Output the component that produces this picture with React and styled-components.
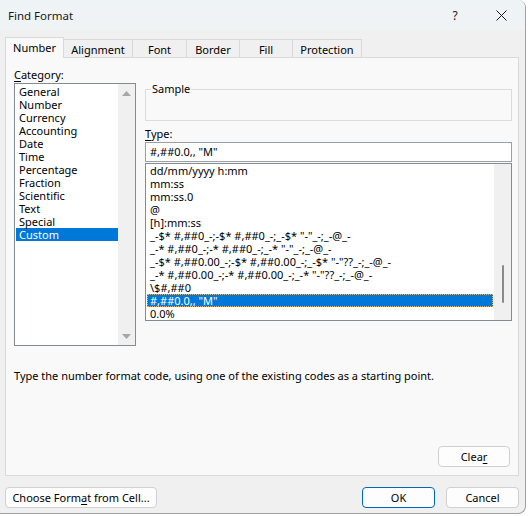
import React from 'react';
import styled, { createGlobalStyle, css } from 'styled-components';

const GlobalStyle = createGlobalStyle`
  html, body {
    margin: 0;
    padding: 0;
    background: #ffffff;
  }
  body {
    font-family: "Noto Sans", "Liberation Sans", sans-serif;
    font-size: 11px;
    color: #000;
  }
`;

// Window frame
const Window = styled.div`
  width: 526px;
  height: 514px;
  box-sizing: border-box;
  background: #f0f0f0;
  border-right: 1px solid #a0a0a0;
  border-bottom: 1px solid #a0a0a0;
  border-radius: 0 8px 8px 0;
  display: flex;
  flex-direction: column;
  overflow: hidden;
`;

const TitleBar = styled.div`
  height: 30px;
  flex-shrink: 0;
  display: flex;
  align-items: center;
  padding: 0 1px 0 8px;
  background: linear-gradient(#eef3f6, #eff3f6);
`;

const Title = styled.div`
  flex: 1;
  color: #1a1a1a;
  font-size: 11.5px;
`;

const CaptionButton = styled.div`
  width: 46px;
  height: 30px;
  display: flex;
  align-items: center;
  justify-content: center;
  color: #1a1a1a;
  font-size: 12px;
`;

const Body = styled.div`
  flex: 1;
  display: flex;
  flex-direction: column;
  padding: 7px 6px 5px 5px;
  min-height: 0;
`;

// Tabs
const TabRow = styled.div`
  display: flex;
  align-items: flex-end;
  height: 21px;
  margin-bottom: -1px;
  position: relative;
  z-index: 1;
`;

const Tab = styled.div`
  box-sizing: border-box;
  width: ${p => p.$width}px;
  display: flex;
  align-items: center;
  justify-content: center;
  border: 1px solid #d9d9d9;
  margin-left: -1px;
  &:first-child { margin-left: 0; }
  ${p => p.$active ? css`
    height: 21px;
    background: #f9f9f9;
    border-bottom: none;
    padding-bottom: 1px;
  ` : css`
    height: 19px;
    background: #f0f0f0;
    padding-top: 1px;
  `}
`;

const Panel = styled.div`
  flex: 1;
  display: flex;
  flex-direction: column;
  background: #f9f9f9;
  border: 1px solid #d9d9d9;
  padding: 9px 6px 8px 8px;
`;

const TopGrid = styled.div`
  display: grid;
  grid-template-columns: 122px 1fr;
  column-gap: 9px;
  align-items: start;
`;

const Column = styled.div`
  display: flex;
  flex-direction: column;
`;

const Label = styled.div`
  line-height: 15px;
  height: 15px;
  margin-top: ${p => p.$top || 0}px;
  margin-bottom: 1px;
  white-space: nowrap;
`;

const AccessKey = styled.span`
  text-decoration: underline;
  text-underline-offset: 2px;
`;

// List boxes
const ListBox = styled.div`
  display: flex;
  box-sizing: border-box;
  height: ${p => p.$height}px;
  margin-top: ${p => p.$top || 0}px;
  background: #ffffff;
  border: 1px solid #868a91;
  overflow: hidden;
`;

const Items = styled.div`
  flex: 1;
  min-width: 0;
  padding: ${p => p.$pad};
`;

const Item = styled.div`
  height: 13px;
  line-height: 13px;
  padding-left: ${p => p.$indent}px;
  white-space: nowrap;
  box-sizing: border-box;
  ${p => p.$selected && css`
    background: #0078d7;
    color: #ffffff;
  `}
  ${p => p.$focused && css`
    outline: 1px dotted #e8b060;
    outline-offset: -1px;
  `}
`;

const ScrollTrack = styled.div`
  width: 17px;
  flex-shrink: 0;
  background: #f0f0f0;
  display: flex;
  flex-direction: column;
  align-items: center;
  justify-content: ${p => (p.$arrows ? 'space-between' : 'flex-start')};
  padding: ${p => (p.$arrows ? '7px 0 6px' : '0')};
  box-sizing: border-box;
`;

const Thumb = styled.div`
  width: 2px;
  height: 38px;
  margin-top: 101px;
  border-radius: 1px;
  background: #8a8a8a;
`;

// Sample group box
const GroupBox = styled.div`
  position: relative;
  height: 32px;
  box-sizing: border-box;
  margin-top: 22px;
  border: 1px solid #dcdcdc;
`;

const Legend = styled.span`
  position: absolute;
  left: 5px;
  top: -9px;
  padding: 0 1px;
  line-height: 15px;
  background: #f9f9f9;
`;

const TextInput = styled.div`
  box-sizing: border-box;
  height: 20px;
  background: #ffffff;
  border: 1px solid #9a9ea5;
  padding-left: 4px;
  line-height: 18px;
  white-space: nowrap;
`;

const Description = styled.div`
  margin-top: 22px;
  line-height: 15px;
`;

const Spacer = styled.div`
  flex: 1;
`;

const ClearRow = styled.div`
  display: flex;
  justify-content: flex-end;
  padding-right: 2px;
`;

const Button = styled.div`
  box-sizing: border-box;
  width: ${p => p.$width}px;
  height: 21px;
  display: flex;
  align-items: center;
  justify-content: center;
  background: #fdfdfd;
  border: 1px solid ${p => (p.$default ? '#0067c0' : '#d0d0d0')};
  border-radius: 4px;
  white-space: nowrap;
`;

const ButtonRow = styled.div`
  display: flex;
  align-items: center;
  margin-top: 11px;
  gap: 11px;
`;

const Arrow = ({ down }) => (
  <svg width="9" height="5" viewBox="0 0 9 5">
    <path d={down ? 'M0 0 H9 L4.5 5 Z' : 'M0 5 H9 L4.5 0 Z'} fill="#a6a6a6" />
  </svg>
);

const CloseIcon = () => (
  <svg width="11" height="11" viewBox="0 0 11 11">
    <path d="M0.5 0.5 L10.5 10.5 M10.5 0.5 L0.5 10.5" stroke="#1a1a1a" strokeWidth="1" />
  </svg>
);

const tabs = [
  { label: 'Number', width: 59 },
  { label: 'Alignment', width: 70 },
  { label: 'Font', width: 55 },
  { label: 'Border', width: 54 },
  { label: 'Fill', width: 54 },
  { label: 'Protection', width: 70 },
];

const categories = [
  'General', 'Number', 'Currency', 'Accounting', 'Date', 'Time',
  'Percentage', 'Fraction', 'Scientific', 'Text', 'Special', 'Custom',
];

const types = [
  'dd/mm/yyyy h:mm',
  'mm:ss',
  'mm:ss.0',
  '@',
  '[h]:mm:ss',
  '_-$* #,##0_-;-$* #,##0_-;_-$* "-"_-;_-@_-',
  '_-* #,##0_-;-* #,##0_-;_-* "-"_-;_-@_-',
  '_-$* #,##0.00_-;-$* #,##0.00_-;_-$* "-"??_-;_-@_-',
  '_-* #,##0.00_-;-* #,##0.00_-;_-* "-"??_-;_-@_-',
  '\\$#,##0',
  '#,##0.0,, "M"',
  '0.0%',
];

export default function App() {
  return (
    <>
      <GlobalStyle />
      <Window>
        <TitleBar>
          <Title>Find Format</Title>
          <CaptionButton>?</CaptionButton>
          <CaptionButton><CloseIcon /></CaptionButton>
        </TitleBar>
        <Body>
          <TabRow>
            {tabs.map((t, i) => (
              <Tab key={t.label} $width={t.width} $active={i === 0}>{t.label}</Tab>
            ))}
          </TabRow>
          <Panel>
            <TopGrid>
              <Column>
                <Label><AccessKey>C</AccessKey>ategory:</Label>
                <ListBox $height={263}>
                  <Items $pad="1px 0 0 1px">
                    {categories.map(c => (
                      <Item key={c} $indent={3} $selected={c === 'Custom'}>{c}</Item>
                    ))}
                  </Items>
                  <ScrollTrack $arrows>
                    <Arrow />
                    <Arrow down />
                  </ScrollTrack>
                </ListBox>
              </Column>
              <Column>
                <GroupBox>
                  <Legend>Sample</Legend>
                </GroupBox>
                <Label $top={5}><AccessKey>T</AccessKey>ype:</Label>
                <TextInput>#,##0.0,, "M"</TextInput>
                <ListBox $height={158} $top={1}>
                  <Items $pad="0 1px 0 1px">
                    {types.map(t => {
                      const sel = t === '#,##0.0,, "M"';
                      return (
                        <Item key={t} $indent={3} $selected={sel} $focused={sel}>{t}</Item>
                      );
                    })}
                  </Items>
                  <ScrollTrack>
                    <Thumb />
                  </ScrollTrack>
                </ListBox>
              </Column>
            </TopGrid>
            <Description>
              Type the number format code, using one of the existing codes as a starting point.
            </Description>
            <Spacer />
            <ClearRow>
              <Button $width={72}>Clea<AccessKey>r</AccessKey></Button>
            </ClearRow>
          </Panel>
          <ButtonRow>
            <Button $width={152}>Choose Form<AccessKey>a</AccessKey>t from Cell...</Button>
            <Spacer />
            <Button $width={73} $default>OK</Button>
            <Button $width={73}>Cancel</Button>
          </ButtonRow>
        </Body>
      </Window>
    </>
  );
}
